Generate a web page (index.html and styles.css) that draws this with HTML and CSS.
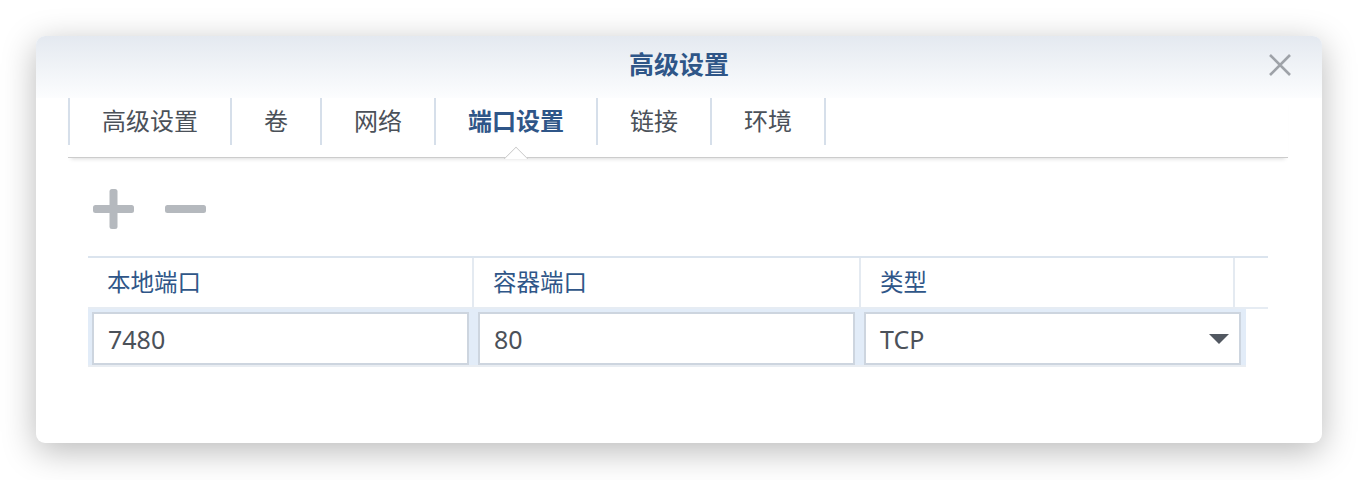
FILE: index.html
```html
<!DOCTYPE html>
<html lang="zh-CN">
<head>
  <meta charset="UTF-8">
  <meta name="viewport" content="width=device-width, initial-scale=1.0">
  <title>高级设置</title>
  <link rel="stylesheet" href="styles.css">
</head>
<body>
  <div class="dialog">
    <div class="titlebar">
      <h1>高级设置</h1>
      <button class="close" aria-label="关闭">
        <svg width="24" height="24" viewBox="0 0 24 24"><path d="M2 2 L22 22 M22 2 L2 22" stroke="#9ea2a8" stroke-width="2.6" fill="none"/></svg>
      </button>
    </div>

    <div class="tabs">
      <div class="tab">高级设置</div>
      <div class="tab">卷</div>
      <div class="tab">网络</div>
      <div class="tab active">端口设置</div>
      <div class="tab">链接</div>
      <div class="tab">环境</div>
    </div>

    <div class="toolbar">
      <button class="tool" aria-label="新增">
        <svg width="41" height="40" viewBox="0 0 41 40"><rect x="0" y="16" width="41" height="8" rx="2.5" fill="#b5b9be"/><rect x="16.5" y="0" width="8" height="40" rx="2.5" fill="#b5b9be"/></svg>
      </button>
      <button class="tool" aria-label="删除">
        <svg width="41" height="40" viewBox="0 0 41 40"><rect x="0" y="16" width="41" height="8" rx="2.5" fill="#b5b9be"/></svg>
      </button>
    </div>

    <div class="grid">
      <div class="grid-head">
        <div class="col">本地端口</div>
        <div class="col">容器端口</div>
        <div class="col">类型</div>
        <div class="col"></div>
      </div>
      <div class="grid-row">
        <div class="cell"><input type="text" value="7480"></div>
        <div class="cell"><input type="text" value="80"></div>
        <div class="cell">
          <div class="select">
            <span>TCP</span>
            <svg width="20" height="10" viewBox="0 0 20 10"><path d="M0 0 H20 L10 10 Z" fill="#525861"/></svg>
          </div>
        </div>
      </div>
    </div>
  </div>
</body>
</html>
```

FILE: styles.css
```css
body {
  margin: 0;
  padding: 36px 0 37px 36px;
  background: #fff;
  font-family: "Noto Sans", "Noto Sans CJK SC", sans-serif;
  color: #4b5159;
}

.dialog {
  width: 1286px;
  height: 407px;
  background: #fff;
  border-radius: 9px;
  box-shadow: 0 8px 34px rgba(0, 0, 0, 0.28);
  overflow: hidden;
}

.titlebar {
  position: relative;
  height: 62px;
  background: linear-gradient(to bottom, #e4e9f0, #fcfdfe);
}

.titlebar h1 {
  margin: 0;
  text-align: center;
  line-height: 56px;
  font-size: 25px;
  font-weight: bold;
  color: #2f5688;
}

.close {
  position: absolute;
  top: 17px;
  right: 30px;
  width: 24px;
  height: 24px;
  padding: 0;
  border: none;
  background: transparent;
  cursor: pointer;
}

.close svg {
  display: block;
}

.tabs {
  display: flex;
  margin: 0 34px 0 32px;
  height: 59px;
  border-bottom: 1px solid #cccccc;
  box-shadow: 0 4px 4px -3px rgba(0, 0, 0, 0.14);
}

.tab {
  position: relative;
  height: 47px;
  line-height: 46px;
  padding: 0 32px;
  border-left: 2px solid #d6dfea;
  font-size: 24px;
  color: #4b5159;
}

.tab:last-child {
  border-right: 2px solid #d6dfea;
}

.tab.active {
  font-weight: bold;
  color: #2f5688;
}

.tab.active::after {
  content: "";
  position: absolute;
  left: calc(50% - 9px);
  top: calc(100% + 5px);
  width: 17px;
  height: 17px;
  background: #fff;
  border-top: 1px solid #cccccc;
  border-left: 1px solid #cccccc;
  transform: rotate(45deg);
  clip-path: polygon(0 0, 100% 0, 0 100%);
}

.toolbar {
  display: flex;
  gap: 31px;
  padding: 31px 0 0 57px;
  height: 40px;
}

.tool {
  padding: 0;
  border: none;
  background: transparent;
  cursor: pointer;
}

.tool svg {
  display: block;
}

.grid {
  margin: 27px 54px 0 52px;
}

.grid-head {
  display: grid;
  grid-template-columns: 386px 387px 374px 1fr;
  height: 49px;
  border-top: 2px solid #dbe4ee;
  border-bottom: 2px solid #e6ecf3;
}

.grid-head .col {
  padding-left: 19px;
  line-height: 48px;
  font-size: 23.5px;
  color: #2f5688;
  border-right: 2px solid #e4eaf1;
}

.grid-head .col:last-child {
  border-right: none;
}

.grid-row {
  display: grid;
  grid-template-columns: 386px 386px 386px;
  width: 1158px;
  height: 56px;
  background: #e2ecf8;
  border-bottom: 2px solid #e9edf2;
}

.cell {
  padding: 3px 5px 3px 4px;
}

.cell input,
.select {
  box-sizing: border-box;
  width: 100%;
  height: 53px;
  margin: 0;
  padding: 0 14px;
  border: 2px solid #cdd5df;
  background: #fff;
  font-family: "Noto Sans", sans-serif;
  font-size: 25px;
  color: #4b5159;
  outline: none;
}

.select {
  display: flex;
  align-items: center;
  justify-content: space-between;
  padding-right: 10px;
}
```
